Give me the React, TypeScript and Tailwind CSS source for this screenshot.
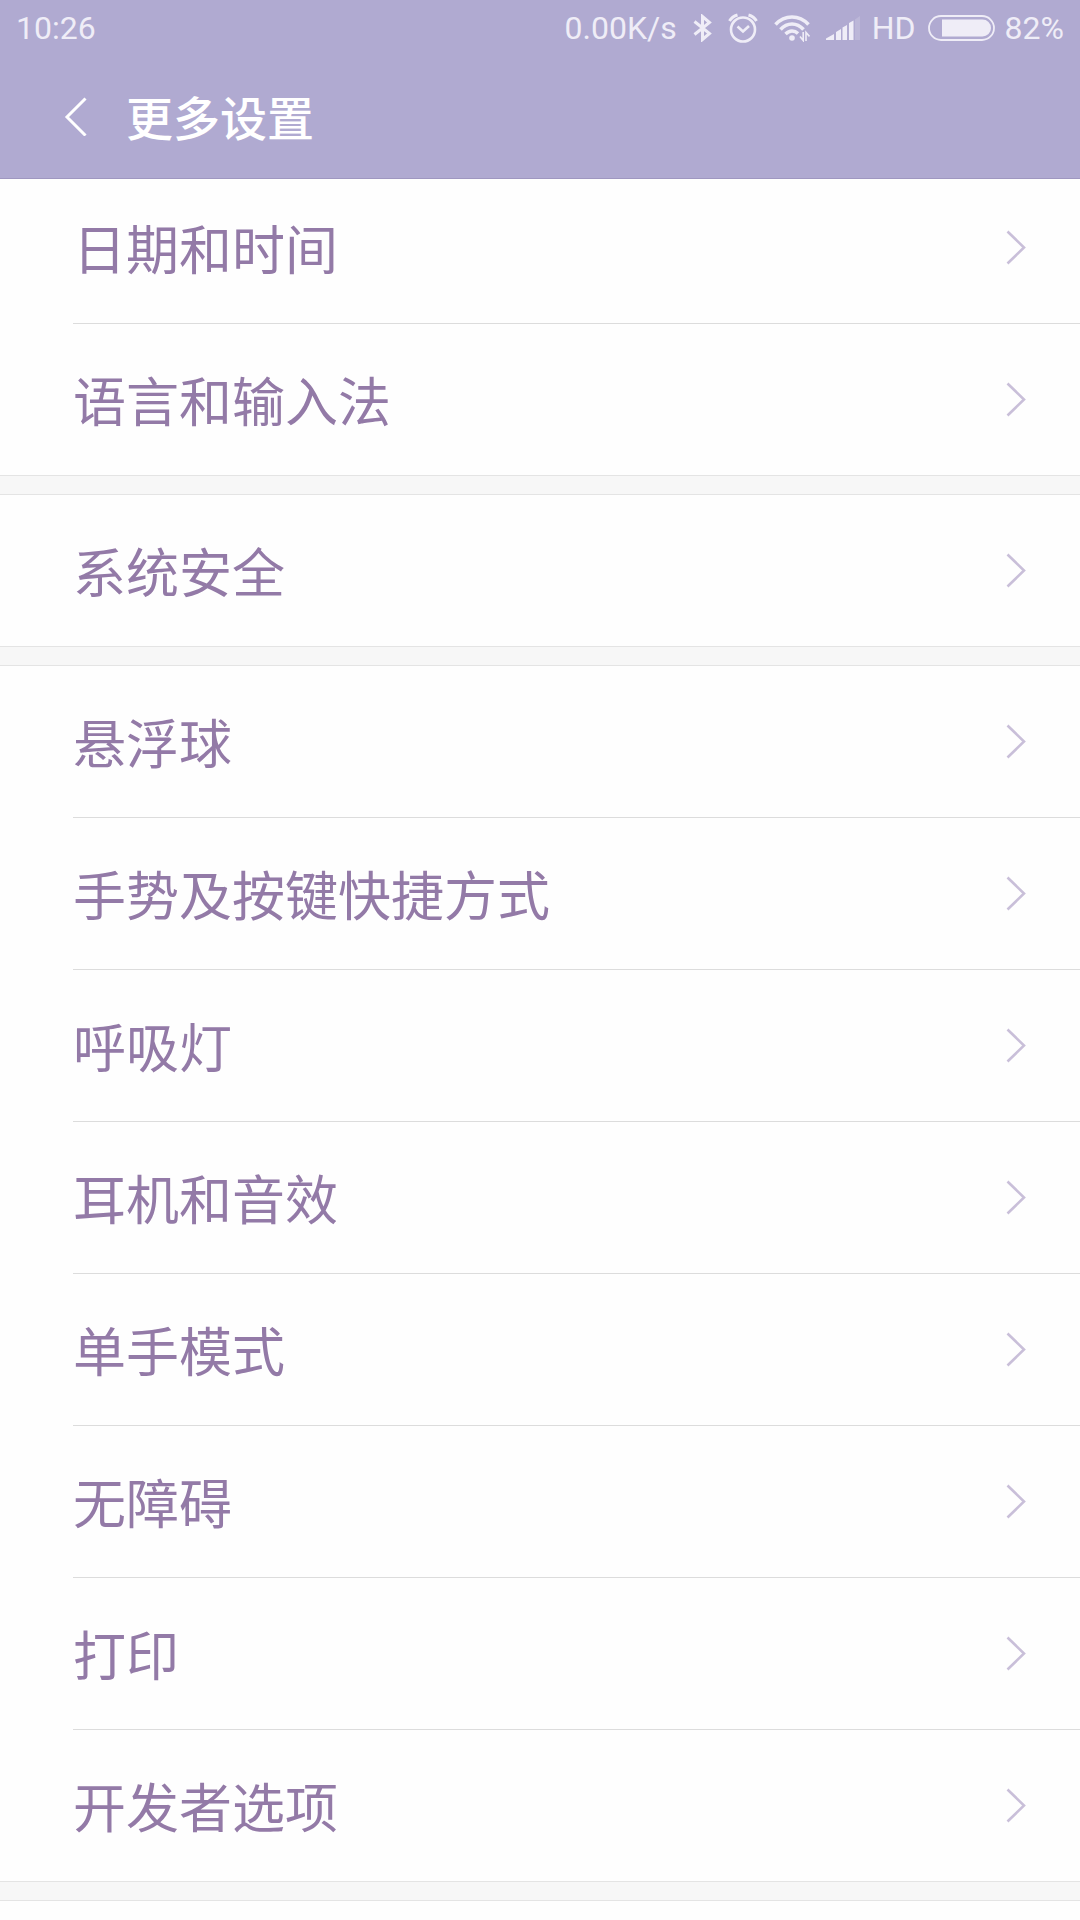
const SECTIONS = [
  ["日期和时间", "语言和输入法"],
  ["系统安全"],
  [
    "悬浮球",
    "手势及按键快捷方式",
    "呼吸灯",
    "耳机和音效",
    "单手模式",
    "无障碍",
    "打印",
    "开发者选项",
  ],
];

function BluetoothIcon() {
  return (
    <svg width="19" height="28" viewBox="0 0 19 28" fill="none" stroke="currentColor" strokeWidth="3">
      <path d="M1.5 7.5 16.5 19.5 9.5 25.5V2.5L16.5 8.5 1.5 20.5" />
    </svg>
  );
}

function AlarmIcon() {
  return (
    <svg width="30" height="30" viewBox="0 0 30 30" fill="none" stroke="currentColor">
      <circle cx="15" cy="16.5" r="12" strokeWidth="2.6" />
      <path d="M9.5 13.5 15 18.5 21 13" strokeWidth="2.6" />
      <path d="M1.5 8Q4 3.5 9.5 2M20.5 2Q26 3.5 28.5 8" strokeWidth="3" />
    </svg>
  );
}

function WifiIcon() {
  return (
    <svg width="36" height="28" viewBox="0 0 36 28" fill="none" stroke="currentColor">
      <path d="M1.5 10.5Q8.5 3 18 3T34.5 10.5" strokeWidth="3.6" />
      <path d="M6.5 15.5Q11.5 10 18 10T29.5 15.5" strokeWidth="3.6" />
      <path d="M11.5 20Q14.5 17 18 17T24 19.5" strokeWidth="3.4" />
      <circle cx="18" cy="24" r="2.8" fill="currentColor" stroke="none" />
      <path d="M29.2 18V26.5L26 22.5M32 27V18.5L35.5 22.5" strokeWidth="1.6" />
    </svg>
  );
}

function SignalIcon() {
  return (
    <svg width="34" height="24" viewBox="0 0 34 24" fill="currentColor">
      <path d="M0 24V22.5L8 18V24ZM10 24V16L15 13V24ZM16.5 24V11.5L21 9V24ZM23 24V7L27.5 4.5V24Z" />
      <path d="M29 24V3.5L34 0V24Z" opacity="0.2" />
    </svg>
  );
}

function BatteryIcon() {
  return (
    <svg width="67" height="26" viewBox="0 0 67 26" fill="none">
      <rect x="1" y="1" width="65" height="24" rx="12" stroke="currentColor" strokeWidth="1.8" />
      <path d="M14 4.5H54.5A8.5 8.5 0 0 1 54.5 21.5H14Z" fill="currentColor" />
    </svg>
  );
}

function StatusBar() {
  return (
    <div className="flex h-14 items-center justify-between px-4 font-[Roboto,sans-serif] text-[32px] leading-none text-[#efedf7]">
      <span>10:26</span>
      <div className="flex items-center gap-3">
        <div className="flex items-center gap-4">
          <span>0.00K/s</span>
          <BluetoothIcon />
          <AlarmIcon />
          <WifiIcon />
          <SignalIcon />
        </div>
        <span>HD</span>
        <div className="flex items-center gap-2.5">
          <BatteryIcon />
          <span>82%</span>
        </div>
      </div>
    </div>
  );
}

function SettingRow({ label }: { label: string }) {
  return (
    <a href="#" className="flex h-[151px] items-center justify-between pr-[54px]">
      <span className="text-[53px] leading-none">{label}</span>
      <svg width="20" height="36" viewBox="0 0 20 36" fill="none" stroke="#c9bfd9" strokeWidth="2.6">
        <path d="M1.5 1.5 18 17.5 1.5 33.5" />
      </svg>
    </a>
  );
}

export default function App() {
  return (
    <div className="min-h-screen bg-[#fefefe] font-['Noto_Sans_CJK_SC',sans-serif] text-[#937aa7]">
      <header className="relative z-10 border-b border-[#9f97c0] bg-[#b0aad1]">
        <StatusBar />
        <div className="flex h-[122px] items-center gap-[38px] pb-1 pl-16 text-white">
          <button type="button" aria-label="返回">
            <svg width="24" height="42" viewBox="0 0 24 42" fill="none" stroke="currentColor" strokeWidth="3">
              <path d="M21.5 4.5 3 23 21.5 41.5" />
            </svg>
          </button>
          <h1 className="text-[47px] font-medium leading-none">更多设置</h1>
        </div>
      </header>

      {/* list is scrolled slightly under the header */}
      <main className="-mt-[7px]">
        {SECTIONS.map((rows) => (
          <section key={rows[0]}>
            <ul className="divide-y divide-[#dcdcdc] pl-[73px]">
              {rows.map((label) => (
                <li key={label}>
                  <SettingRow label={label} />
                </li>
              ))}
            </ul>
            <div className="h-5 border-y border-[#e4e4e4] bg-[#f7f7f7]" />
          </section>
        ))}
      </main>
    </div>
  );
}
